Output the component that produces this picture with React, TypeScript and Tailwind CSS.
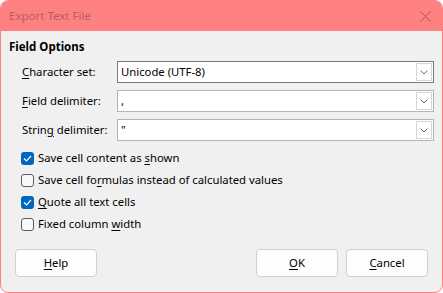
import React from "react";

const U = ({ children }: { children: React.ReactNode }) => (
  <span className="underline underline-offset-2 decoration-1">{children}</span>
);

function Combo({ value, focused }: { value: string; focused?: boolean }) {
  return (
    <div
      className={`flex-1 h-[22px] flex items-stretch bg-white border ${
        focused ? "border-[#7a7a7a]" : "border-[#b4b4b4]"
      }`}
    >
      <div className="flex-1 flex items-center pl-[3px] text-[11.3px] text-black leading-none">{value}</div>
      <div className="w-[16px] my-[1px] mr-[1px] border border-[#d6d6d6] bg-white flex items-center justify-center">
        <svg width="8" height="5" viewBox="0 0 8 5">
          <path d="M0.5 0.5 L4 4 L7.5 0.5" fill="none" stroke="#666" strokeWidth="1" />
        </svg>
      </div>
    </div>
  );
}

function Check({ checked, children }: { checked?: boolean; children: React.ReactNode }) {
  return (
    <div className="flex items-center h-[22px] pl-[12px]">
      {checked ? (
        <div className="w-[13px] h-[13px] rounded-[3px] bg-[#0067c0] flex items-center justify-center">
          <svg width="9" height="7" viewBox="0 0 9 7">
            <path d="M1 3.5 L3.5 6 L8 1" fill="none" stroke="white" strokeWidth="1.2" />
          </svg>
        </div>
      ) : (
        <div className="w-[13px] h-[13px] rounded-[3px] border border-[#5c5c5c] bg-[#f8f8f8]" />
      )}
      <span className="ml-[4px] text-[11.3px] text-black">{children}</span>
    </div>
  );
}

function Btn({ children, w }: { children: React.ReactNode; w: string }) {
  return (
    <div
      className={`${w} h-[28px] rounded-[4px] border border-[#d0d0d0] bg-[#fdfdfd] flex items-center justify-center text-[11.3px] text-black`}
    >
      {children}
    </div>
  );
}

export default function App() {
  return (
    <div
      className="w-[443px] h-[293px] bg-white"
      style={{ fontFamily: '"Noto Sans", "Open Sans", sans-serif' }}
    >
      <div className="w-[443px] h-[293px] rounded-[8px] overflow-hidden border border-[#ff8080] flex flex-col bg-[#f0f0f0]">
        <div className="h-[30px] bg-[#ff8080] flex items-center justify-between pl-[8px] pr-[11px] shrink-0">
          <span className="text-[11.5px] text-[#b46060]">Export Text File</span>
          <svg width="11" height="11" viewBox="0 0 11 11">
            <path d="M0.5 0.5 L10.5 10.5 M10.5 0.5 L0.5 10.5" stroke="#a85858" strokeWidth="1" />
          </svg>
        </div>
        <div className="flex-1 flex flex-col pl-[8px] pr-[8px] pt-[8px]">
          <div className="text-[11.5px] font-bold text-black leading-[16px]">Field Options</div>
          <div className="flex flex-col gap-[7px] mt-[6px] pl-[13px]">
            <div className="flex items-center">
              <span className="w-[95px] text-[11.3px] text-black">
                <U>C</U>haracter set:
              </span>
              <Combo value="Unicode (UTF-8)" focused />
            </div>
            <div className="flex items-center">
              <span className="w-[95px] text-[11.3px] text-black">
                <U>F</U>ield delimiter:
              </span>
              <Combo value="," />
            </div>
            <div className="flex items-center">
              <span className="w-[95px] text-[11.3px] text-black">
                Strin<U>g</U> delimiter:
              </span>
              <Combo value={'"'} />
            </div>
          </div>
          <div className="flex flex-col mt-[6px]">
            <Check checked>
              Save cell content as <U>s</U>hown
            </Check>
            <Check>
              Save cell fo<U>r</U>mulas instead of calculated values
            </Check>
            <Check checked>
              <U>Q</U>uote all text cells
            </Check>
            <Check>
              Fixed column <U>w</U>idth
            </Check>
          </div>
          <div className="flex items-center mt-[14px] pl-[6px] pr-[6px]">
            <Btn w="w-[82px]">
              <U>H</U>elp
            </Btn>
            <div className="flex-1" />
            <Btn w="w-[82px]">
              <U>O</U>K
            </Btn>
            <div className="w-[8px]" />
            <Btn w="w-[82px]">
              <U>C</U>ancel
            </Btn>
          </div>
        </div>
      </div>
    </div>
  );
}
